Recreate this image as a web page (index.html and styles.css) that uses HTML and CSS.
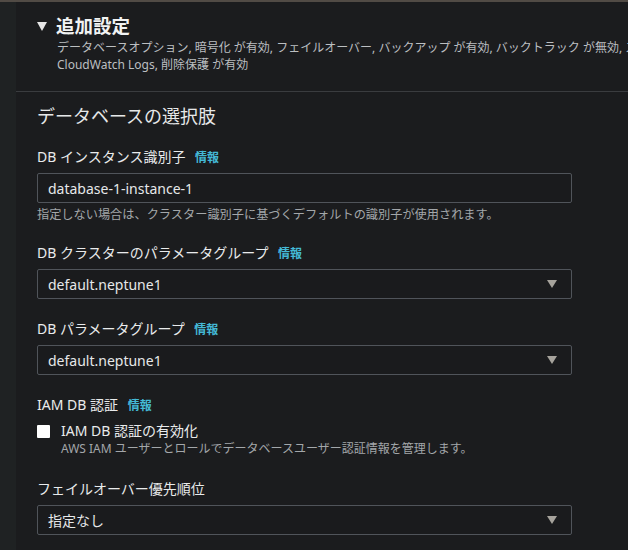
FILE: index.html
```html
<!DOCTYPE html>
<html lang="ja">
<head>
<meta charset="utf-8">
<link rel="stylesheet" href="styles.css">
</head>
<body>
<div class="page">
  <div class="rail"></div>
  <div class="main">
    <div class="header">
      <div class="title-row">
        <span class="caret"></span>
        <h2 class="title">追加設定</h2>
      </div>
      <p class="summary">データベースオプション, 暗号化 が有効, フェイルオーバー, バックアップ が有効, バックトラック が無効, ス<br>CloudWatch Logs, 削除保護 が有効</p>
    </div>
    <div class="body">
      <h3 class="section-title">データベースの選択肢</h3>

      <div class="field">
        <div class="label">DB インスタンス識別子 <a class="info">情報</a></div>
        <div class="input">database-1-instance-1</div>
        <div class="hint">指定しない場合は、クラスター識別子に基づくデフォルトの識別子が使用されます。</div>
      </div>

      <div class="field">
        <div class="label">DB クラスターのパラメータグループ <a class="info">情報</a></div>
        <div class="select"><span>default.neptune1</span><span class="arrow"></span></div>
      </div>

      <div class="field">
        <div class="label">DB パラメータグループ <a class="info">情報</a></div>
        <div class="select"><span>default.neptune1</span><span class="arrow"></span></div>
      </div>

      <div class="field field-check">
        <div class="label">IAM DB 認証 <a class="info">情報</a></div>
        <div class="check">
          <span class="box"></span>
          <div class="check-text">
            <div class="check-label">IAM DB 認証の有効化</div>
            <div class="check-desc">AWS IAM ユーザーとロールでデータベースユーザー認証情報を管理します。</div>
          </div>
        </div>
      </div>

      <div class="field">
        <div class="label">フェイルオーバー優先順位</div>
        <div class="select"><span>指定なし</span><span class="arrow"></span></div>
      </div>
    </div>
  </div>
</div>
</body>
</html>
```

FILE: styles.css
```css
* { box-sizing: border-box; }
html, body { margin: 0; padding: 0; }
body {
  background: #1b1c1e;
  font-family: "Noto Sans", "Noto Sans CJK JP", sans-serif;
  color: #e6e8e9;
  width: 628px;
  height: 550px;
  overflow: hidden;
}
.page {
  display: flex;
  height: 550px;
  border-top: 2px solid #514b45;
}
.rail {
  width: 16px;
  flex: none;
  background: #1f2223;
}
.main {
  flex: 1;
  background: #1b1c1e;
  min-width: 0;
}
.header {
  padding: 12px 0 18px 21px;
  border-bottom: 1px solid #3a3c3f;
  white-space: nowrap;
  overflow: hidden;
}
.title-row {
  display: flex;
  align-items: center;
  gap: 9px;
}
.caret {
  width: 0; height: 0;
  border-left: 5px solid transparent;
  border-right: 5px solid transparent;
  border-top: 9px solid #e6e6e6;
  margin-top: 1px;
}
.title {
  margin: 0;
  font-size: 18.5px;
  font-weight: 700;
  line-height: 24px;
  color: #f2f3f3;
}
.summary {
  margin: 1px 0 0 20px;
  font-size: 12px;
  line-height: 17px;
  color: #bcbfc1;
}
.body {
  padding: 12px 56px 0 21px;
}
.section-title {
  margin: 0 0 19px;
  font-size: 18px;
  font-weight: 400;
  line-height: 24px;
  color: #e6e8e9;
}
.field { margin-bottom: 20px; }
.field-check { margin-bottom: 22px; }
.label {
  font-size: 14px;
  line-height: 20px;
  color: #e9ebec;
  margin-bottom: 6px;
}
.info {
  color: #44b9d6;
  font-weight: 700;
  font-size: 12px;
  line-height: 1;
  margin-left: 6px;
}
.input, .select {
  height: 30px;
  border: 1px solid #50545a;
  border-radius: 2px;
  background: #1a1b1d;
  padding: 0 10px;
  display: flex;
  align-items: center;
  font-size: 14px;
  color: #e6e8e9;
}
.select { justify-content: space-between; padding-right: 14px; }
.arrow {
  width: 0; height: 0;
  border-left: 5px solid transparent;
  border-right: 5px solid transparent;
  border-top: 8px solid #a6a39c;
}
.hint {
  margin-top: 4px;
  font-size: 12.2px;
  line-height: 16px;
  color: #a3a7aa;
}
.check {
  display: flex;
  gap: 11px;
}
.box {
  width: 13px;
  height: 13px;
  background: #ffffff;
  border-radius: 1px;
  margin-top: 4px;
  flex: none;
}
.check-label {
  font-size: 14px;
  line-height: 20px;
  color: #e9ebec;
}
.check-desc {
  font-size: 12px;
  line-height: 16px;
  color: #a3a7aa;
}
```
